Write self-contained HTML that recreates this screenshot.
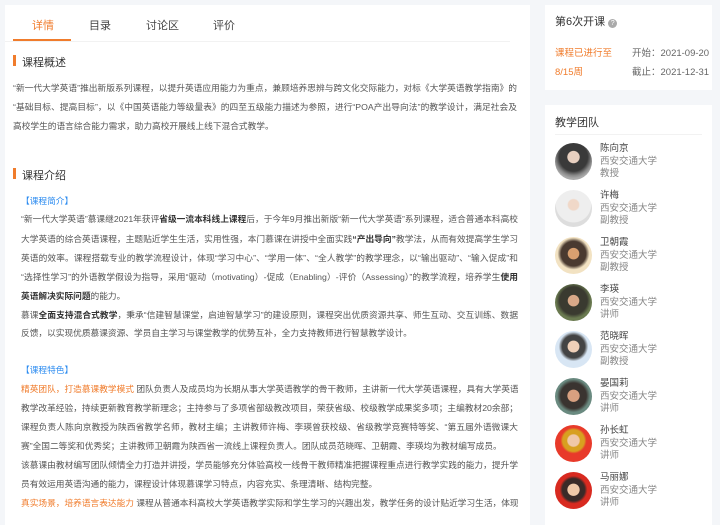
<!DOCTYPE html>
<html><head><meta charset="utf-8"><style>
*{margin:0;padding:0;box-sizing:border-box}
body{width:720px;height:512px;overflow:hidden;background:#f4f6f9;font-family:"Liberation Sans","Noto Sans CJK SC",sans-serif;color:#555;position:relative}
.card{position:absolute;background:#fff;overflow:hidden}
.a{position:absolute;white-space:nowrap}
.l{position:absolute;font-size:8.7px;line-height:12px;white-space:nowrap;text-align:justify;text-align-last:justify;color:#555;overflow:hidden}
.ll{text-align-last:left}
.o{color:#f07c2c}
.bl{color:#2d8cf0}
b{color:#333;font-weight:bold}
.h{position:absolute;font-size:11px;color:#333;padding-left:9px}
.h:before{content:"";position:absolute;left:0;top:1px;width:3px;height:11px;background:#f07c2c}
.av{position:absolute;left:10px;width:37px;height:37px;border-radius:50%}
.nm{position:absolute;left:55px;font-size:9.5px;line-height:12.5px;color:#888}
.nm span{color:#444;display:block}
</style></head><body>
<div class="card" style="left:5px;top:5px;width:525px;height:520px"></div>
<div class="a" style="left:32px;top:17px;font-size:11px;color:#f07c2c">详情</div>
<div class="a" style="left:89px;top:17px;font-size:11px;color:#444">目录</div>
<div class="a" style="left:146px;top:17px;font-size:11px;color:#444">讨论区</div>
<div class="a" style="left:213px;top:17px;font-size:11px;color:#444">评价</div>
<div class="a" style="left:5px;top:41px;width:505px;height:1px;background:#f2f2f2"></div>
<div class="a" style="left:13px;top:39px;width:58px;height:2px;background:#f07c2c"></div>
<div class="h" style="left:13px;top:54px">课程概述</div>
<div class="l" style="left:13px;top:82px;width:504px">“新一代大学英语”推出新版系列课程，以提升英语应用能力为重点，兼顾培养思辨与跨文化交际能力，对标《大学英语教学指南》的</div>
<div class="l" style="left:13px;top:101px;width:504px">“基础目标、提高目标”，以《中国英语能力等级量表》的四至五级能力描述为参照，进行“POA产出导向法”的教学设计，满足社会及</div>
<div class="l ll" style="left:13px;top:120px;width:504px">高校学生的语言综合能力需求，助力高校开展线上线下混合式教学。</div>
<div class="h" style="left:13px;top:167px">课程介绍</div>
<div class="l ll bl" style="left:21px;top:195px">【课程简介】</div>
<div class="l" style="left:21px;top:213px;width:497px">“新一代大学英语”慕课继2021年获评<b>省级一流本科线上课程</b>后，于今年9月推出新版“新一代大学英语”系列课程，适合普通本科高校</div>
<div class="l" style="left:21px;top:233px;width:497px">大学英语的综合英语课程，主题贴近学生生活，实用性强，本门慕课在讲授中全面实践<b>“产出导向”</b>教学法，从而有效提高学生学习</div>
<div class="l" style="left:21px;top:252px;width:497px">英语的效率。课程搭载专业的教学流程设计，体现“学习中心”、“学用一体”、“全人教学”的教学理念，以“输出驱动”、“输入促成”和</div>
<div class="l" style="left:21px;top:271px;width:497px">“选择性学习”的外语教学假设为指导，采用“驱动（motivating）-促成（Enabling）-评价（Assessing）”的教学流程，培养学生<b>使用</b></div>
<div class="l ll" style="left:21px;top:290px"><b>英语解决实际问题</b>的能力。</div>
<div class="l" style="left:21px;top:309px;width:497px">慕课<b>全面支持混合式教学</b>，秉承“信建智慧课堂，启迪智慧学习”的建设原则，课程突出优质资源共享、师生互动、交互训练、数据</div>
<div class="l ll" style="left:21px;top:327px">反馈，以实现优质慕课资源、学员自主学习与课堂教学的优势互补，全力支持教师进行智慧教学设计。</div>
<div class="l ll bl" style="left:21px;top:364px">【课程特色】</div>
<div class="l" style="left:21px;top:383px;width:497px"><span class="o">精英团队，打造慕课教学模式</span> 团队负责人及成员均为长期从事大学英语教学的骨干教师，主讲新一代大学英语课程，具有大学英语</div>
<div class="l" style="left:21px;top:402px;width:497px">教学改革经验，持续更新教育教学新理念；主持参与了多项省部级教改项目，荣获省级、校级教学成果奖多项；主编教材20余部；</div>
<div class="l" style="left:21px;top:421px;width:497px">课程负责人陈向京教授为陕西省教学名师，教材主编；主讲教师许梅、李瑛曾获校级、省级教学竞赛特等奖、“第五届外语微课大</div>
<div class="l ll" style="left:21px;top:440px">赛”全国二等奖和优秀奖；主讲教师卫朝霞为陕西省一流线上课程负责人。团队成员范晓晖、卫朝霞、李瑛均为教材编写成员。</div>
<div class="l" style="left:21px;top:459px;width:497px">该慕课由教材编写团队倾情全力打造并讲授，学员能够充分体验高校一线骨干教师精准把握课程重点进行教学实践的能力，提升学</div>
<div class="l ll" style="left:21px;top:478px">员有效运用英语沟通的能力，课程设计体现慕课学习特点，内容充实、条理清晰、结构完整。</div>
<div class="l" style="left:21px;top:497px;width:497px"><span class="o">真实场景，培养语言表达能力</span> 课程从普通本科高校大学英语教学实际和学生学习的兴趣出发，教学任务的设计贴近学习生活，体现</div>

<div class="card" style="left:545px;top:5px;width:167px;height:85px"></div>
<div class="a" style="left:555px;top:13px;font-size:11px;color:#333">第6次开课 <span style="display:inline-block;width:9px;height:9px;border-radius:50%;background:#aaa;color:#fff;font-size:7px;line-height:9px;text-align:center;vertical-align:0">?</span></div>
<div class="a o" style="left:555px;top:45px;font-size:9.5px">课程已进行至</div>
<div class="a o" style="left:555px;top:64px;font-size:9.5px">8/15周</div>
<div class="a" style="left:632px;top:45px;font-size:9.5px;color:#666">开始：2021-09-20</div>
<div class="a" style="left:632px;top:64px;font-size:9.5px;color:#666">截止：2021-12-31</div>

<div class="card" style="left:545px;top:105px;width:167px;height:420px">
<div class="a" style="left:10px;top:9px;font-size:11px;color:#333">教学团队</div>
<div class="a" style="left:10px;top:29px;width:147px;height:1px;background:#f2f2f2"></div>
<div class="av" style="top:38px;background:radial-gradient(circle at 50% 38%,#e8d0c0 0 20%,#3a3a3a 22% 48%,#888 62%,#aaa 72%)"></div>
<div class="nm" style="top:38px"><span>陈向京</span>西安交通大学<br>教授</div>
<div class="av" style="top:85px;background:radial-gradient(circle at 50% 40%,#f0d8c8 0 18%,#eee 22% 60%,#ddd 62%)"></div>
<div class="nm" style="top:85px"><span>许梅</span>西安交通大学<br>副教授</div>
<div class="av" style="top:132px;background:radial-gradient(circle at 50% 45%,#d9a070 0 20%,#4a3a30 22% 45%,#f2e2c2 58%)"></div>
<div class="nm" style="top:132px"><span>卫朝霞</span>西安交通大学<br>副教授</div>
<div class="av" style="top:179px;background:radial-gradient(circle at 50% 45%,#d8a888 0 20%,#3a3a30 22% 50%,#6a7a50 64%)"></div>
<div class="nm" style="top:179px"><span>李瑛</span>西安交通大学<br>讲师</div>
<div class="av" style="top:226px;background:radial-gradient(circle at 50% 42%,#f0d0b8 0 20%,#444 22% 40%,#d8e6f4 52%)"></div>
<div class="nm" style="top:226px"><span>范晓晖</span>西安交通大学<br>副教授</div>
<div class="av" style="top:273px;background:radial-gradient(circle at 50% 48%,#d8a080 0 22%,#3a3430 24% 48%,#6a8a80 62%)"></div>
<div class="nm" style="top:273px"><span>晏国莉</span>西安交通大学<br>讲师</div>
<div class="av" style="top:320px;background:radial-gradient(circle at 50% 42%,#f0c8a8 0 20%,#d8a020 24% 38%,#e83a2a 46%)"></div>
<div class="nm" style="top:320px"><span>孙长虹</span>西安交通大学<br>讲师</div>
<div class="av" style="top:367px;background:radial-gradient(circle at 50% 48%,#f0c8a8 0 22%,#3a2a28 24% 42%,#d82a20 52%)"></div>
<div class="nm" style="top:367px"><span>马丽娜</span>西安交通大学<br>讲师</div>
</div>
</body></html>
